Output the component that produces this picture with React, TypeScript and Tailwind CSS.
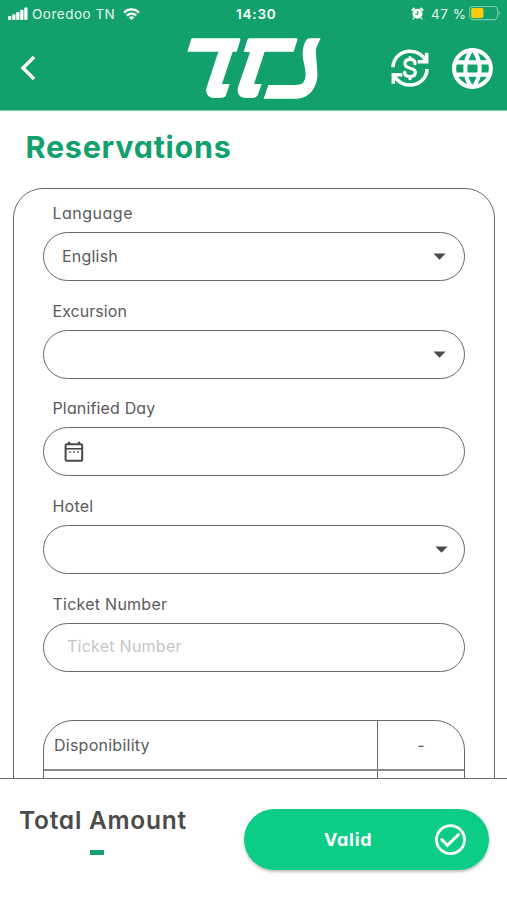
import type { ReactNode } from "react";
import { MdLanguage } from "react-icons/md";

type FieldProps = {
  label: string;
  labelClass: string;
  children?: ReactNode;
};

function Caret({ className = "" }: { className?: string }) {
  return (
    <svg width="13" height="7" viewBox="0 0 13 7" className={`ml-auto shrink-0 ${className}`} aria-hidden="true">
      <path d="M0.4 0.5h12.2L6.5 6.7z" fill="#4a4a4c" />
    </svg>
  );
}

function Field({ label, labelClass, children }: FieldProps) {
  return (
    <div className="mb-[17.7px]">
      <div className={`ml-[9.5px] h-[31px] text-[16px] leading-[24.5px] whitespace-nowrap ${labelClass}`}>{label}</div>
      <div className="flex h-[49px] w-[422px] items-center rounded-full border border-[#68686a] pr-[18px] pl-[18px]">
        {children}
      </div>
    </div>
  );
}

function StatusBar() {
  return (
    <div className="flex h-7 items-center text-white">
      <div className="flex w-[236px] items-center pl-2">
        <svg width="20" height="14" viewBox="0 0 20 14" fill="currentColor" aria-hidden="true">
          <rect x="0" y="9" width="3.3" height="4" rx="1" />
          <rect x="4.2" y="7.3" width="3.3" height="5.7" rx="1" />
          <rect x="8.2" y="5" width="3.3" height="8" rx="1" />
          <rect x="12.2" y="2.7" width="3.3" height="10.3" rx="1" />
          <rect x="16.2" y="0.5" width="3.3" height="12.5" rx="1" />
        </svg>
        <span className="ml-1 w-[91px] text-[13.5px] tracking-[0.5px] whitespace-nowrap opacity-90">Ooredoo TN</span>
        <svg width="17" height="13" viewBox="0 0 17 13" fill="none" stroke="currentColor" strokeWidth="2.3" aria-hidden="true">
          <path d="M1 4.6C5.1 0.4 11.9 0.4 16 4.6" />
          <path d="M3.8 7.6c2.6-2.6 6.8-2.6 9.4 0" />
          <path d="M8.5 12 5.7 9.4c1.5-1.5 4.1-1.5 5.6 0z" fill="currentColor" stroke="none" />
        </svg>
      </div>
      <span className="w-[175px] text-[13.5px] font-semibold tracking-[0.8px]">14:30</span>
      <svg width="13" height="13" viewBox="0 0 13 13" fill="none" className="-mt-px" aria-hidden="true">
        <circle cx="6.5" cy="6.7" r="5" fill="#fff" />
        <path d="M0.8 3.6 3.5 1M12.2 3.6 9.5 1" stroke="#fff" strokeWidth="1.8" />
        <path d="m2.8 11 -1 1.3M10.2 11l1 1.3" stroke="#fff" strokeWidth="1.3" />
        <path d="M6.7 3.8v3.4H4.3" stroke="#12a16d" strokeWidth="1.1" />
      </svg>
      <span className="ml-[7px] w-[38px] text-[13.5px] tracking-[0.5px] whitespace-nowrap opacity-90">47 %</span>
      <svg width="32" height="15" viewBox="0 0 32 15" fill="none" className="-mt-px" aria-hidden="true">
        <rect x="0.6" y="0.4" width="28" height="13.2" rx="3.6" stroke="#79c9aa" strokeWidth="1.1" />
        <rect x="2.2" y="2" width="12.3" height="10" rx="1.8" fill="#fccb0b" />
        <path d="M29.9 4.9c1.6 0.7 1.6 3.5 0 4.2z" fill="#79c9aa" />
      </svg>
    </div>
  );
}

function Logo() {
  return (
    <svg width="134" height="61" viewBox="51 113 402 183" fill="#fff" role="img" aria-label="TCS">
      <path d="M66 114H209Q212 116 211 120L200 154H188L156 251H179L168 285Q164 293 150 293H133C112 293 104 276 111 258L145 154H52L63 119Q64 114 66 114Z" />
      <path d="M238 114H380Q383 116 382 120L371 154H284L252 251H275L263 285Q259 293 246 293H228C206 293 199 276 205 258L240 156L221 154L232 119Q234 114 238 114Z" />
      <path d="M418 114H452L440 139Q436 148 438 162L442 215C445 253 423 295 379 295H281L295 254H377Q407 254 407 224C407 200 397 180 398 157Q399 135 409 119Q412 114 418 114Z" />
    </svg>
  );
}

function ExchangeIcon() {
  return (
    <svg width="38" height="38" viewBox="63 147 114 114" fill="none" stroke="#fff" strokeWidth="10.5" aria-hidden="true">
      <path d="M69 202C69 176 91 154 120 154c22 0 38 11 48 29" />
      <path d="M170 158v27h-27" />
      <path d="M171 207c0 26-22 48-51 48-22 0-38-11-48-29" />
      <path d="M70 251v-27h27" />
      {/* solid corners of the arrowheads */}
      <path d="M174 170v19h-25zM66 240v-20h25z" fill="#fff" stroke="none" />
      <path
        d="M135 191c0-9-6-13-15-13s-15 5-15 13c0 18 31 10 31 26 0 8-6 13-16 13s-16-5-16-13M120 177v-4M120 231v5"
        strokeWidth="9.5"
        strokeLinecap="round"
      />
    </svg>
  );
}

function Header() {
  return (
    <header className="h-[111px] border-b border-[#7fcbae] bg-[#12a16d]">
      <StatusBar />
      <div className="flex h-20 items-center">
        <button type="button" aria-label="Back" className="ml-[20px] w-[166.5px]">
          <svg width="16" height="26" viewBox="0 0 16 26" fill="none" stroke="#fff" strokeWidth="3.4" aria-hidden="true">
            <path d="M14 2 3 13l11 11" />
          </svg>
        </button>
        <Logo />
        <span className="ml-[70px]">
          <ExchangeIcon />
        </span>
        <MdLanguage className="ml-[19px] shrink-0 text-white" size={49} />
      </div>
    </header>
  );
}

export default function App() {
  return (
    <div className="flex h-[900px] w-[507px] flex-col overflow-hidden bg-white font-['Inter',sans-serif] text-[#5a5a5c] [font-feature-settings:'cv11']">
      <Header />
      <main className="min-h-0 flex-1 overflow-hidden">
        <h1 className="ml-[25.5px] h-[77px] pt-[14px] text-[30.5px] leading-[43px] font-bold tracking-[0.75px] text-[#12a16d]">
          Reservations
        </h1>
        <section className="mx-[13px] h-[700px] w-[482px] rounded-[30px] border border-[#68686a] pt-[12px] pl-[29px]">
          <Field label="Language" labelClass="tracking-[0.5px]">
            <span className="-mt-[2px] text-[16px] tracking-[0.2px]">English</span>
            <Caret />
          </Field>
          <Field label="Excursion" labelClass="tracking-[0.05px]">
            <Caret />
          </Field>
          <Field label="Planified Day" labelClass="tracking-[0.15px]">
            <svg width="20" height="22" viewBox="0 0 20 22" className="ml-[2px]" fill="none" stroke="#4a4a4c" aria-hidden="true">
              <rect x="1.6" y="3.2" width="16.6" height="16.6" rx="1" strokeWidth="2" />
              <path d="M1.6 7.8h16.6" strokeWidth="1.6" />
              <path d="M5 0.8v2.5M15 0.8v2.5" strokeWidth="2.4" />
              <path d="M5.2 11h1.6M9.2 11h1.6M13.2 11h1.6" strokeWidth="1.6" />
            </svg>
          </Field>
          <Field label="Hotel" labelClass="tracking-[0.2px]">
            <Caret className="-mr-[2px]" />
          </Field>
          <Field label="Ticket Number" labelClass="tracking-[0.25px]">
            <span className="-mt-[3px] ml-[5px] text-[16px] tracking-[0.25px] text-[#c6c6c8]">Ticket Number</span>
          </Field>

          {/* Availability table, cut off by the footer */}
          <div className="mt-[48.5px] w-[422px] overflow-hidden rounded-t-[30px] border border-[#68686a]">
            <div className="flex h-[50px] border-b-2 border-[#8a8a8c]">
              <div className="w-[334px] border-r border-[#68686a] pl-[10px] text-[16px] leading-[49px] tracking-[0.25px]">
                Disponibility
              </div>
              <div className="flex-1 text-center text-[16px] leading-[49px]">-</div>
            </div>
            <div className="flex h-[50px]">
              <div className="w-[334px] border-r border-[#68686a]" />
            </div>
          </div>
        </section>
      </main>
      <footer className="flex h-[122px] shrink-0 border-t border-[#6b6b6d] bg-white">
        <div className="ml-[19px] w-[225px] pt-[24px]">
          <div className="text-[24.5px] leading-[35px] font-semibold tracking-[0.75px] whitespace-nowrap text-[#4b4b4d]">
            Total Amount
          </div>
          <div className="mt-[12px] ml-[71px] h-[4.5px] w-[14px] bg-[#12a16d]" />
        </div>
        <button
          type="button"
          className="mt-[30px] flex h-[61px] w-[245px] items-center rounded-full bg-[#0ccd86] pl-[80px] text-[18px] font-bold text-white shadow-[0_2px_3px_rgba(0,0,0,0.25)]"
        >
          <span className="w-[110px] text-left tracking-[0.7px]">Valid</span>
          <svg width="32" height="32" viewBox="0 0 32 32" fill="none" stroke="#fff" strokeWidth="2.8" aria-hidden="true">
            <circle cx="16.5" cy="15.7" r="14" />
            <path d="m7 14.7 6.4 6.7L25.3 9.8" strokeWidth="3" />
          </svg>
        </button>
      </footer>
    </div>
  );
}
